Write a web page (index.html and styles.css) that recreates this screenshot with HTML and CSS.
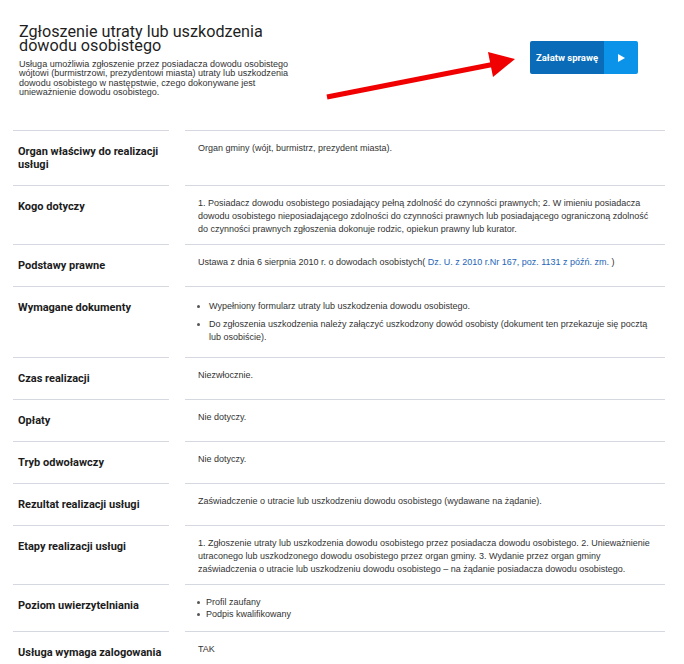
FILE: index.html
```html
<!DOCTYPE html>
<html lang="pl">
<head>
<meta charset="utf-8">
<title>Zgłoszenie utraty lub uszkodzenia dowodu osobistego</title>
<link rel="stylesheet" href="styles.css">
</head>
<body>
<div class="page">
  <header class="header">
    <div class="intro">
      <h1 class="title">Zgłoszenie utraty lub uszkodzenia dowodu osobistego</h1>
      <p class="desc">Usługa umożliwia zgłoszenie przez posiadacza dowodu osobistego wójtowi (burmistrzowi, prezydentowi miasta) utraty lub uszkodzenia dowodu osobistego w następstwie, czego dokonywane jest unieważnienie dowodu osobistego.</p>
    </div>
    <a class="btn" href="#">
      <span class="btn-label">Załatw sprawę</span>
      <span class="btn-icon"><svg width="7" height="8" viewBox="0 0 7 8"><path d="M0 0 L7 4 L0 8 Z" fill="#fff"/></svg></span>
    </a>
  </header>

  <div class="table">
    <div class="label">Organ właściwy do realizacji usługi</div>
    <div class="value">Organ gminy (wójt, burmistrz, prezydent miasta).</div>

    <div class="label">Kogo dotyczy</div>
    <div class="value">1. Posiadacz dowodu osobistego posiadający pełną zdolność do czynności prawnych; 2. W imieniu posiadacza dowodu osobistego nieposiadającego zdolności do czynności prawnych lub posiadającego ograniczoną zdolność do czynności prawnych zgłoszenia dokonuje rodzic, opiekun prawny lub kurator.</div>

    <div class="label">Podstawy prawne</div>
    <div class="value">Ustawa z dnia 6 sierpnia 2010 r. o dowodach osobistych( <a class="link" href="#">Dz. U. z 2010 r.Nr 167, poz. 1131 z późń. zm. </a>)</div>

    <div class="label">Wymagane dokumenty</div>
    <div class="value">
      <ul class="docs">
        <li>Wypełniony formularz utraty lub uszkodzenia dowodu osobistego.</li>
        <li>Do zgłoszenia uszkodzenia należy załączyć uszkodzony dowód osobisty (dokument ten przekazuje się pocztą lub osobiście).</li>
      </ul>
    </div>

    <div class="label">Czas realizacji</div>
    <div class="value">Niezwłocznie.</div>

    <div class="label">Opłaty</div>
    <div class="value">Nie dotyczy.</div>

    <div class="label">Tryb odwoławczy</div>
    <div class="value">Nie dotyczy.</div>

    <div class="label">Rezultat realizacji usługi</div>
    <div class="value">Zaświadczenie o utracie lub uszkodzeniu dowodu osobistego (wydawane na żądanie).</div>

    <div class="label">Etapy realizacji usługi</div>
    <div class="value">1. Zgłoszenie utraty lub uszkodzenia dowodu osobistego przez posiadacza dowodu osobistego. 2. Unieważnienie utraconego lub uszkodzonego dowodu osobistego przez organ gminy. 3. Wydanie przez organ gminy zaświadczenia o utracie lub uszkodzeniu dowodu osobistego – na żądanie posiadacza dowodu osobistego.</div>

    <div class="label">Poziom uwierzytelniania</div>
    <div class="value">
      <ul class="auth">
        <li>Profil zaufany</li>
        <li>Podpis kwalifikowany</li>
      </ul>
    </div>

    <div class="label">Usługa wymaga zalogowania</div>
    <div class="value">TAK</div>
  </div>

  <svg class="arrow" width="684" height="120" viewBox="0 0 684 120">
    <line x1="327" y1="97" x2="495" y2="64" stroke="#f00000" stroke-width="5"/>
    <polygon points="515,59 488,52 493,77" fill="#f00000"/>
  </svg>
</div>
</body>
</html>
```

FILE: styles.css
```css
html, body {
  margin: 0;
  padding: 0;
  background: #ffffff;
}

.page {
  position: relative;
  width: 684px;
  padding: 0 19px 0 13px;
  box-sizing: border-box;
}

.header {
  display: flex;
  justify-content: space-between;
  align-items: flex-start;
  padding: 25px 27px 33px 6px;
}

.intro {
  width: 278px;
}

.title {
  margin: 0;
  font-family: Roboto, "Noto Sans", sans-serif;
  font-weight: 400;
  font-size: 16.2px;
  line-height: 14px;
  color: #1f1f1f;
}

.desc {
  margin: 7px 0 0 0;
  font-family: "Liberation Sans", Arial, sans-serif;
  font-size: 9.05px;
  line-height: 9.3px;
  color: #333333;
}

.btn {
  display: flex;
  margin-top: 16px;
  height: 33px;
  border-radius: 2px;
  overflow: hidden;
  text-decoration: none;
}

.btn-label {
  display: flex;
  align-items: center;
  justify-content: center;
  width: 74px;
  background: #0a6cb8;
  color: #ffffff;
  font-family: Roboto, "Noto Sans", sans-serif;
  font-weight: 700;
  font-size: 9.5px;
}

.btn-icon {
  display: flex;
  align-items: center;
  justify-content: center;
  width: 34px;
  background: #0b93ea;
}

.btn-icon svg {
  display: block;
}

.table {
  display: grid;
  grid-template-columns: 156px 480px;
  column-gap: 16px;
}

.label {
  border-top: 1px solid #d5d8e0;
  padding: 14px 5px 14px 5px;
  font-family: Roboto, "Noto Sans", sans-serif;
  font-weight: 700;
  font-size: 11px;
  line-height: 13px;
  color: #1c1c1c;
}

.value {
  border-top: 1px solid #d5d8e0;
  padding: 11px 10px 8px 13px;
  font-family: "Liberation Sans", Arial, sans-serif;
  font-size: 9px;
  line-height: 13px;
  color: #333333;
}

.link {
  color: #2466b8;
  text-decoration: none;
}

.docs, .auth {
  list-style: none;
  margin: 2px 0 0 -1px;
  padding: 0;
}

.docs li, .auth li {
  display: flex;
  align-items: flex-start;
}

.docs li::before, .auth li::before {
  content: "";
  flex: 0 0 3px;
  width: 3px;
  height: 3px;
  border-radius: 50%;
  background: #555555;
  margin-top: 5px;
}

.docs li {
  gap: 9px;
  margin-bottom: 5px;
}

.auth {
  margin-top: 0;
  margin-bottom: 3px;
}

.auth li {
  gap: 6px;
  line-height: 12px;
}

.auth li::before {
  margin-top: 4.5px;
}

.arrow {
  position: absolute;
  left: 0;
  top: 0;
  pointer-events: none;
}
```
